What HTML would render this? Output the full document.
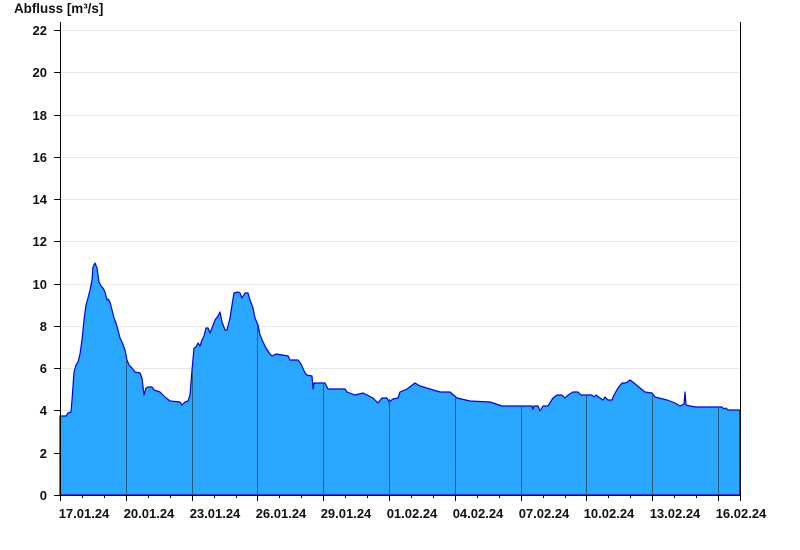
<!DOCTYPE html>
<html><head><style>
html,body{margin:0;padding:0;background:#fff;}
svg{display:block;}
text{font-family:"Liberation Sans",Arial,sans-serif;font-weight:bold;font-size:13px;fill:#111;}
</style></head><body>
<svg width="800" height="550" viewBox="0 0 800 550">
<text x="14" y="13" style="font-size:13.4px">Abfluss [m³/s]</text>
<g stroke="#e8e8e8" stroke-width="1">
<line x1="60" y1="30.5" x2="740" y2="30.5"/><line x1="60" y1="72.5" x2="740" y2="72.5"/>
<line x1="60" y1="115.5" x2="740" y2="115.5"/><line x1="60" y1="157.5" x2="740" y2="157.5"/>
<line x1="60" y1="199.5" x2="740" y2="199.5"/><line x1="60" y1="241.5" x2="740" y2="241.5"/>
<line x1="60" y1="284.5" x2="740" y2="284.5"/><line x1="60" y1="326.5" x2="740" y2="326.5"/>
<line x1="60" y1="368.5" x2="740" y2="368.5"/><line x1="60" y1="410.5" x2="740" y2="410.5"/>
<line x1="60" y1="453.5" x2="740" y2="453.5"/>
</g>
<polygon fill="#2aa8ff" stroke="#0000ee" stroke-width="1.2" stroke-linejoin="round" points="60,495 60,416 66,416 68,413 71,412 72,400 74,372 76,365 78,362 80,354 82,340 84,320 86,305 88,298 90,290 92,280 93,267 95,263 97,268 99,282 101,286 103,288 105,292 107,300 108,299 110,302 112,310 114,318 116,323 118,330 120,338 122,342 125,350 127,360 129,365 132,368 135,372 140,373 142,378 144,395 146,388 148,387 152,387 154,390 160,392 165,397 170,401 180,402 182,405 185,402 188,401 190,395 192,370 194,348 196,347 198,343 200,346 202,340 204,336 206,328 208,328 210,333 212,328 215,320 218,316 220,312 222,322 225,330 227,330 230,318 232,305 234,293 238,292 240,293 242,298 245,293 248,293 250,300 253,308 255,318 258,325 260,335 263,342 266,348 268,351 270,354 272,356 276,354 288,356 290,360 298,360 301,364 305,373 307,375 312,376 313,389 314,383 325,383 328,389 345,389 347,392 355,395 363,393 367,395 373,398 378,403 382,398 387,398 389,402 393,399 398,398 400,392 407,389 415,383 420,386 430,389 440,392 450,392 457,398 470,401 490,402 502,406 532,406 533,409 534,406 538,406 540,411 543,406 548,406 553,398 557,395 562,395 565,398 568,395 573,392 578,392 581,395 592,395 594,397 596,395 600,398 603,400 605,397 608,400 612,400 614,395 618,388 622,383 626,383 630,380 634,383 640,388 645,392 652,393 655,397 667,400 675,403 680,406 684,404 685,392 686,405 690,406 696,407 722,407 724,409 726,408 728,410 740,410 740,495"/>
<g stroke="#2a5a7a" stroke-width="1">
<line x1="126.5" y1="360" x2="126.5" y2="495"/><line x1="192.5" y1="370" x2="192.5" y2="495"/>
<line x1="257.5" y1="325" x2="257.5" y2="495"/><line x1="323.5" y1="383" x2="323.5" y2="495"/>
<line x1="389.5" y1="399" x2="389.5" y2="495"/><line x1="455.5" y1="397" x2="455.5" y2="495"/>
<line x1="521.5" y1="406" x2="521.5" y2="495"/><line x1="586.5" y1="395" x2="586.5" y2="495"/>
<line x1="652.5" y1="394" x2="652.5" y2="495"/><line x1="718.5" y1="407" x2="718.5" y2="495"/>
</g>
<g stroke="#000" stroke-width="1">
<line x1="60.5" y1="22" x2="60.5" y2="496"/><line x1="740.5" y1="22" x2="740.5" y2="496"/>
<line x1="60" y1="495.5" x2="741" y2="495.5"/>
<line x1="54" y1="30.5" x2="60" y2="30.5"/><line x1="54" y1="72.5" x2="60" y2="72.5"/>
<line x1="54" y1="115.5" x2="60" y2="115.5"/><line x1="54" y1="157.5" x2="60" y2="157.5"/>
<line x1="54" y1="199.5" x2="60" y2="199.5"/><line x1="54" y1="241.5" x2="60" y2="241.5"/>
<line x1="54" y1="284.5" x2="60" y2="284.5"/><line x1="54" y1="326.5" x2="60" y2="326.5"/>
<line x1="54" y1="368.5" x2="60" y2="368.5"/><line x1="54" y1="410.5" x2="60" y2="410.5"/>
<line x1="54" y1="453.5" x2="60" y2="453.5"/><line x1="54" y1="495.5" x2="60" y2="495.5"/>
</g>
<g stroke="#000">
<path d="M60.5 495v6M82.5 495v3M104.5 495v3M126.5 495v6M148.5 495v3M170.5 495v3M192.5 495v6M214.5 495v3M236.5 495v3M257.5 495v6M279.5 495v3M301.5 495v3M323.5 495v6M345.5 495v3M367.5 495v3M389.5 495v6M411.5 495v3M433.5 495v3M455.5 495v6M477.5 495v3M499.5 495v3M521.5 495v6M543.5 495v3M565.5 495v3M586.5 495v6M608.5 495v3M630.5 495v3M652.5 495v6M674.5 495v3M696.5 495v3M718.5 495v6M740.5 495v6"/>
</g>
<g text-anchor="end">
<text x="47" y="35">22</text><text x="47" y="77">20</text><text x="47" y="120">18</text>
<text x="47" y="162">16</text><text x="47" y="204">14</text><text x="47" y="246">12</text>
<text x="47" y="289">10</text><text x="47" y="331">8</text><text x="47" y="373">6</text>
<text x="47" y="415">4</text><text x="47" y="458">2</text><text x="47" y="500">0</text>
</g>
<g text-anchor="middle">
<text x="84" y="518">17.01.24</text><text x="149" y="518">20.01.24</text>
<text x="215" y="518">23.01.24</text><text x="281" y="518">26.01.24</text>
<text x="346" y="518">29.01.24</text><text x="412" y="518">01.02.24</text>
<text x="478" y="518">04.02.24</text><text x="544" y="518">07.02.24</text>
<text x="609" y="518">10.02.24</text><text x="675" y="518">13.02.24</text>
<text x="741" y="518">16.02.24</text>
</g>
</svg>
</body></html>
